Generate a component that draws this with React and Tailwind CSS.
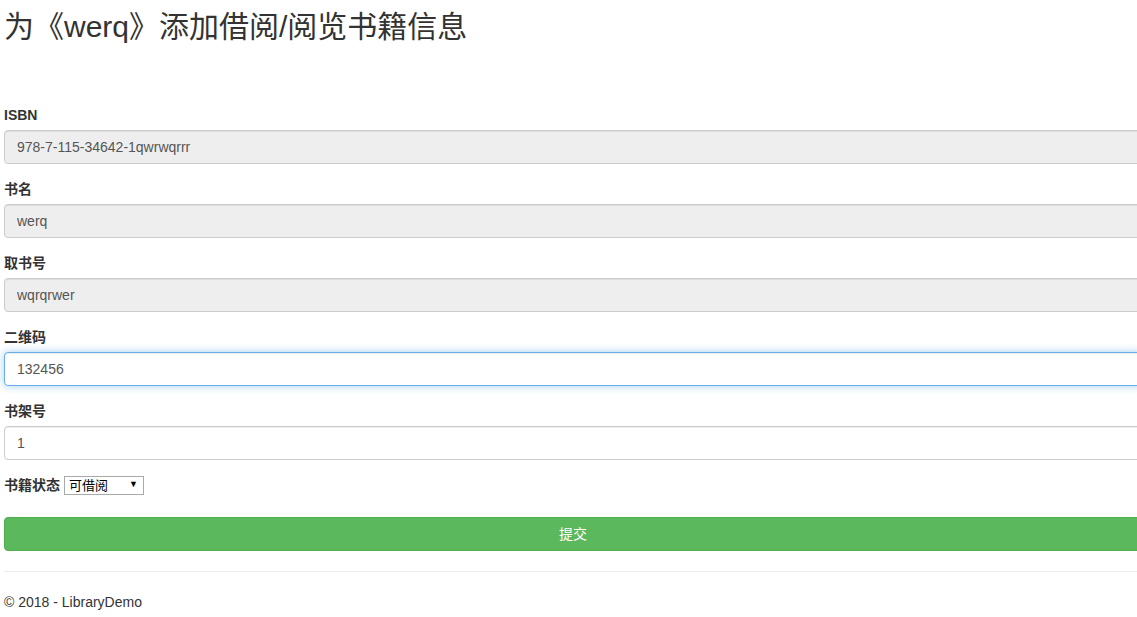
const FONT = "font-['Liberation_Sans','Noto_Sans_CJK_SC',sans-serif]"

const fields = [
  { label: 'ISBN', value: '978-7-115-34642-1qwrwqrrr', disabled: true },
  { label: '书名', value: 'werq', disabled: true },
  { label: '取书号', value: 'wqrqrwer', disabled: true },
  { label: '二维码', value: '132456', focused: true },
  { label: '书架号', value: '1' },
]

function Field({ label, value, disabled, focused }) {
  return (
    <div className="mb-[15px]">
      <label className="mb-[5px] block text-[14px] font-bold leading-[20px] text-[#333]">{label}</label>
      <input
        type="text"
        defaultValue={value}
        readOnly
        className={
          'block h-[34px] w-[1138px] rounded-[4px] border px-[12px] text-[14px] text-[#555] outline-none ' +
          (disabled
            ? 'border-[#ccc] bg-[#eee] shadow-[inset_0_1px_1px_rgba(0,0,0,0.075)]'
            : focused
              ? 'border-[#66afe9] bg-white shadow-[inset_0_1px_1px_rgba(0,0,0,0.075),0_0_8px_rgba(102,175,233,0.6)]'
              : 'border-[#ccc] bg-white shadow-[inset_0_1px_1px_rgba(0,0,0,0.075)]')
        }
      />
    </div>
  )
}

export default function App() {
  return (
    <div className={`${FONT} w-full overflow-hidden bg-white pl-[4px] text-[14px] text-[#333]`}>
      <h2 className="mt-[10px] mb-[62px] text-[30px] font-normal leading-[33px]">为《werq》添加借阅/阅览书籍信息</h2>

      <form>
        {fields.map((f) => (
          <Field key={f.label} {...f} />
        ))}

        <div className="flex h-[20px] items-center gap-[4px]">
          <span className="text-[14px] font-bold leading-[20px]">书籍状态</span>
          <div className="relative">
            <select className="h-[19px] w-[80px] appearance-none border border-[#a9a9a9] bg-white pl-[4px] text-[13px] leading-[17px] text-black outline-none">
              <option>可借阅</option>
              <option>不可借阅</option>
            </select>
            <span className="pointer-events-none absolute right-[6px] top-[2px] text-[9px] leading-[14px] text-black">▼</span>
          </div>
        </div>

        <button
          type="button"
          className="mt-[22px] block h-[34px] w-[1138px] rounded-[4px] border border-[#4cae4c] bg-[#5cb85c] text-[14px] text-white"
        >
          提交
        </button>
      </form>

      <hr className="mt-[20px] mb-[20px] w-[1138px] border-t border-[#eee]" />
      <footer>
        <p className="text-[14px] leading-[20px]">© 2018 - LibraryDemo</p>
      </footer>
    </div>
  )
}
